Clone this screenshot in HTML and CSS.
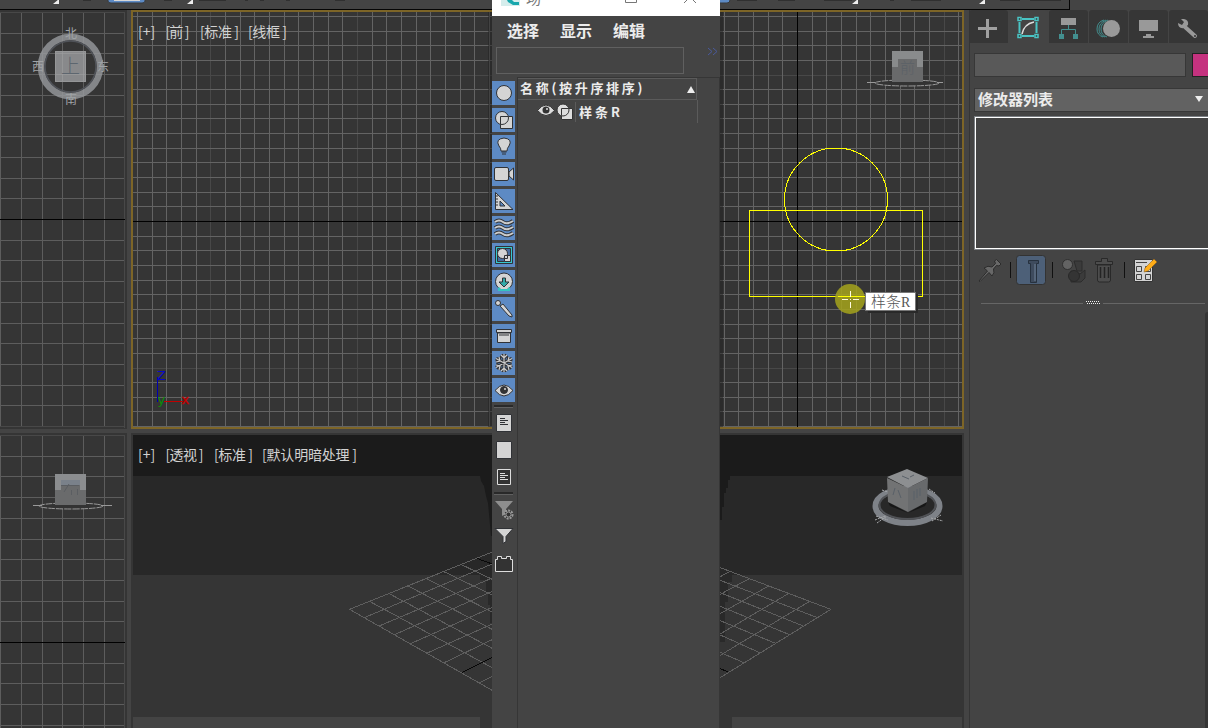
FILE: index.html
```html
<!DOCTYPE html>
<html lang="zh-CN">
<head>
<meta charset="utf-8">
<title>场景资源管理器</title>
<link rel="stylesheet" href="styles.css">
</head>
<body>
<div class="app">
  <main class="workspace">
    <div class="toolbar">
      <svg width="1070" height="10">
        <path class="tool-mark" d="M83 .5h8M164 .5h8M199 .5h27M245 .5h3M260 .5h4M286 .5h4M335 .5h10M737 .5h20M778 .5h17M824 .5h28M890 .5h4M911 .5h30M1000 .5h20M1030 .5h31"/>
        <path d="M108 -2v3q0 2 3 2h31q3 0 3-2v-3z" fill="#5d8ac4" stroke="#37393b"/><path d="M114 0h26v1h-26z" fill="#d8d8d8"/>
        <path d="M716 -2v5h11q3 0 3-3v-2z" fill="#5d8ac4" stroke="#37393b"/>
        <path class="tool-corner" d="M59 -1v5h-6zM193 -1v5h-6zM858 -1v5h-6zM985 -1v5h-6z"/>
      </svg>
    </div>
    <div class="viewports">
      <section class="viewport">
        <svg width="127" height="420" viewBox="0 10 127 420">
          <g data-grid="0 124 13 426 0 219 20.8 20.7 side"></g>
          <path class="dim" d="M0 12.500h125M124.500 12v416M0 426.500h125"/>
          <path class="axis" d="M0 219.500h125"/>
          <circle cx="70.500" cy="66.500" r="29.500" fill="none" stroke="#96989c" stroke-width="6.500" opacity=".82"/>
          <circle cx="70.500" cy="66.500" r="25.500" fill="none" stroke="#505359" stroke-width="1.500"/>
          <path d="M55 51h31v31h-31z" fill="#88898b"/><path d="M55.500 51.500h30v30h-30zM62.500 52v29M83.500 52v29M56 53.500h29M56 74.500h29" fill="none" stroke="#a0a1a3" opacity=".55"/>
          <g class="compass"><text x="65" y="38">北</text><text x="65" y="104">南</text><text x="32" y="71">西</text><text x="97" y="71">东</text></g>
          <text class="cube-face" x="61" y="73" font-size="19">上</text>
        </svg>
      </section>
      <section class="viewport active">
        <svg width="833" height="419" viewBox="131 10 833 419">
          <g data-grid="133 962 12 427 797 221 14.67 14.65 main"></g>
          <path class="axis" d="M133 221.500h829M797.500 12v415"/>
          <path d="M488 12h4v415h-4z" fill="#222" opacity=".5"/><path d="M720 12h3v415h-3z" fill="#222" opacity=".5"/>
          <g class="label"><text x="138" y="36.500">[+]</text><text x="165.500" y="36.500" textLength="24">[前 ]</text><text x="200" y="36.500" textLength="39">[标准 ]</text><text x="248" y="36.500" textLength="39">[线框 ]</text></g>
          <path d="M157.500 377v25" stroke="#0000b0"/><path d="M164 401.500h19" stroke="#c00000"/>
          <g class="tripod"><text x="157" y="379.500" fill="#0808c8">Z</text><text x="157.500" y="404" fill="#089008">y</text><text x="181.500" y="404" fill="#c80000" stroke="#c80000" stroke-width=".4">x</text></g>
          <ellipse cx="907" cy="83" rx="32" ry="3" fill="#333" stroke="#999" stroke-dasharray="7 1"/>
          <path d="M867 82.500h8M937 82.500h6" stroke="#999"/>
          <path d="M892 51h31v31h-31z" fill="#696a6b"/><path d="M892 51h31v16h-6v-8h-19v8h-6z" fill="#898b8c"/>
          <text class="cube-face faint" x="900" y="73" font-size="15">前</text>
          <g fill="none" stroke="#ff0" shape-rendering="crispEdges"><circle cx="836" cy="199.500" r="51.500"/><path d="M749.500 210.500h173v86h-173z"/></g>
          <circle cx="850" cy="299" r="15" fill="#a4a31c" opacity=".86"/><path d="M838 296.500h27" stroke="#ff0"/>
          <path d="M850.500 291v6M850.500 302v6M842 299.500h6M853 299.500h6M850 299.500h1" stroke="#fffce0"/>
          <path d="M868 294h50v19h-50z" fill="#292929"/><path d="M865.500 292.500h50v18h-50z" fill="#fff" stroke="#777"/>
          <text class="tip" x="871" y="307">样条<tspan class="tip-latin">R</tspan></text>
        </svg>
      </section>
      <section class="viewport">
        <svg width="127" height="295" viewBox="0 433 127 295">
          <g data-grid="0 124 436 728 0 642 20.8 20.7 side"></g>
          <path class="dim" d="M0 435.500h125M124.500 435v293"/><path class="axis" d="M0 642.500h125"/>
          <ellipse cx="71" cy="506" rx="32" ry="3" fill="#333" stroke="#999" stroke-dasharray="7 1"/><path d="M33 505.500h9M101 505.500h11" stroke="#999"/>
          <path d="M55 474h31v31h-31z" fill="#6a6b6c"/><path d="M55 474h31v16h-6v-6h-19v6h-6z" fill="#8b8d8f"/><path d="M61 480h19v5h-19z" fill="#7a818a"/>
          <path d="M61 485.500h18M69 484l-5 8M71.500 490v5M77.500 489v6" stroke="#5b5e62" fill="none"/>
        </svg>
      </section>
      <section class="viewport">
        <svg width="833" height="295" viewBox="131 433 833 295">
          <path d="M133 435h829v41h-829z" fill="#1b1b1b"/><path d="M133 476h829v99h-829z" fill="#282828"/>
          <path d="M133 717h347v11h-347zM732 717h230v11h-230z" fill="#444"/>
          <path d="M480 476h12v60h-1l-3-33-2-7-2-10-3-5zM720 476h10v4h-2v8h-2v5h-2v14h-2v13h-2z" fill="#1b1b1b"/><path d="M480 575h12v48h-2v-18h-2v-13h-2v-12h-6zM720 575h12v7h-4v20h-3v40h-5z" fill="#292929"/>
          <g class="floor">
            <g transform="translate(340.200 520) scale(.33333)">
              <path d="M28 268L456 96M72 293L456 132M117 318L456 174M163 344L456 214M211 371L456 262M261 399L456 312M312 428L456 359M417 489L456 469M28 268L456 511M88 244L456 443M145 220L456 385M203 198L456 328M257 175L456 276M309 154L456 225M362 133L456 178"/>
              <path class="floor-axis" d="M365 458L456 412M410 115L456 132"/>
            </g>
            <g transform="translate(720.200 400) scale(.33333)">
              <path d="M332 628L0 503M332 628L0 833M268 604L0 766M206 580L0 702M145 558L0 641M87 536L0 583M31 514L0 530M292 653L0 541M249 678L0 578M208 704L0 619M166 730L0 662M121 759L0 705M73 789L0 757"/>
              <path class="floor-axis" d="M22 815L0 806"/>
            </g>
          </g>
          <g class="label"><text x="138" y="459.500">[+]</text><text x="165.500" y="459.500" textLength="38">[透视 ]</text><text x="214" y="459.500" textLength="39">[标准 ]</text><text x="262" y="459.500" textLength="95">[默认明暗处理 ]</text></g>
          <ellipse cx="907.500" cy="506" rx="32" ry="17" fill="#282828" stroke="#7e8288" stroke-width="6"/>
          <ellipse cx="907.500" cy="505" rx="28" ry="14" fill="none" stroke="#505256" stroke-width="2"/>
          <path d="M888 502l20 11 19-11-2 4-17 7-18-7z" fill="#161616"/>
          <path d="M887 477l20-8 21 9-20 10z" fill="#8d8f91"/><path d="M887 478l21 10v24l-20-10z" fill="#727374"/><path d="M928 478l-20 10v24l19-10z" fill="#686a6c"/>
          <path d="M902 476l7 3M910 477l4-2M895 488l-2 7M898 490l3 8M914 491v9M917 489v9M920 488v8" stroke="#596068" fill="none"/>
          <g stroke="#a8aaac" stroke-dasharray="2 1"><path d="M876 516l12 4M875 520l10-4M877 523l10-7M931 518l12 3M932 521l9-6M882 490l6 2M929 489l6 4"/></g>
        </svg>
      </section>
    </div>
  </main>

  <aside class="command-panel">
    <nav class="tabs">
      <span class="tab"><svg viewBox="0 0 40 34"><path d="M9 18.500h19M18.500 9v19" stroke="#a0a0a0" stroke-width="3"/></svg></span>
      <span class="tab selected"><svg viewBox="0 0 40 34"><g fill="none" stroke="#4ac4c4" stroke-width="1.500"><path d="M13 9h12M13 26h12M10.500 12v11M27.500 12v11" stroke-width="2"/><path d="M9 7.500h3v3h-3zM26 7.500h3v3h-3zM9 24.500h3v3h-3zM26 24.500h3v3h-3z" fill="#333"/></g><path d="M13 24q2-10 12-12" stroke="#ddd" stroke-width="1.500" fill="none"/></svg></span>
      <span class="tab"><svg viewBox="0 0 40 34"><path d="M12 8h15v7h-15z" fill="#999"/><path d="M19.500 15v4M12.500 24v-4.500h14v4.500" stroke="#438f8f" fill="none"/><path d="M10 24h5v5h-5zM24 24h5v5h-5z" fill="#438f8f"/></svg></span>
      <span class="tab"><svg viewBox="0 0 40 34"><g fill="none" stroke="#438f8f"><path d="M15 10q-7 2-7 9 0 6 6 8M17 10q-7 3-7 9 0 6 6 8M19 10q-7 3-7 9 0 6 6 8"/></g><circle cx="22.500" cy="18.500" r="8.500" fill="#999"/></svg></span>
      <span class="tab"><svg viewBox="0 0 40 34"><path d="M10 10h19v11h-19zM17 24h5v2h3v2h-11v-2h3z" fill="#999"/></svg></span>
      <span class="tab"><svg viewBox="0 0 40 34"><path d="M16 17L26 26" stroke="#999" stroke-width="4" stroke-linecap="round"/><path d="M12 9l3 3-2 3-4-2q0 6 6 5l4-3q1-5-4-6z" fill="#999"/><circle cx="26" cy="26" r="1" fill="#333"/></svg></span>
    </nav>
    <div class="name-row"><div class="name-field"></div><div class="swatch"></div></div>
    <div class="modifier-select"><span>修改器列表</span><svg width="10" height="8"><path d="M1 1h8l-4 6z" fill="#eee"/></svg></div>
    <div class="modifier-stack"></div>
    <div class="stack-tools">
      <svg width="234" height="32" viewBox="974 254 234 32">
        <path d="M979 281l8.500-10-3.500-3q4-3 8-1l3.500-3.500-1-2.500 2-1.500 4.500 4.500-2 2-2.500-.5-3 3.500q1.500 4-1.500 7l-3-3.500-9 9z" fill="#686868" stroke="#2c2c2c"/>
        <path d="M1010.500 262v16M1052.500 262v16M1124.500 262v16" stroke="#111"/>
        <rect x="1016.500" y="255.500" width="29" height="29" rx="3" fill="#4d6078" stroke="#333"/>
        <path d="M1028.500 260.500h10v3h-2v19h-6v-19h-2z" fill="#3e4b5d" stroke="#26313e"/><path d="M1034 264h2v17h-2z" fill="#56667a"/>
        <path d="M1074 261h8v10h-5zM1071 271l9 3 5-4v8l-4 4-10 0z" fill="#3b3b3b" stroke="#2c2c2c"/><circle cx="1074" cy="276" r="5.500" fill="#343434" stroke="#292929"/><circle cx="1067.500" cy="264.500" r="5" fill="#636363" stroke="#303030"/>
        <path d="M1095.500 264.500h17v-3h-5v-3h-6v3h-6zM1097.500 265v15q0 2 2 2h9q2 0 2-2v-15z" fill="#4d4d4d" stroke="#292929"/><path d="M1100.500 267v11M1104.500 267v11M1108.500 267v11" stroke="#242424" stroke-width="1.500"/>
        <path d="M1134.500 259.500h18v22h-18z" fill="#d4d4d4" stroke="#333"/><path d="M1136.500 266.500h5v5h-5zM1145.500 266.500h5v5h-5zM1136.500 274.500h5v5h-5zM1145.500 274.500h5v5h-5zM1136 262.500h11" fill="none" stroke="#444"/>
        <path d="M1144 272l1-4 9-9 3 3-9 9z" fill="#ffad18" stroke="#7e561c" stroke-width=".5"/>
      </svg>
    </div>
    <div class="rollup-divider"><i></i><svg width="14" height="4"><path d="M0 .5h14M1 2.500h14" stroke="#eee" stroke-dasharray="1 1"/></svg><i></i></div>
    <div class="rollouts"></div>
  </aside>

  <div class="explorer">
    <header class="titlebar">
      <svg width="228" height="16" viewBox="492 0 228 16"><path d="M501 0h19v6h-19z" fill="#d5edec"/><path d="M507 0h5l2 2h5v3h-6l-5-3z" fill="#18a7ad"/><text x="526" y="4" class="window-name">场</text><path d="M625.500-1v3.500h11V-1M684 3l6-6 6 6" fill="none" stroke="#777"/></svg>
    </header>
    <nav class="menu"><span>选择</span><span>显示</span><span>编辑</span></nav>
    <div class="search-row"><div class="search"></div><svg width="12" height="9"><path d="M1 1l4 3.500-4 3.500M6 1l4 3.500-4 3.500" fill="none" stroke="#4a5a9c"/></svg></div>
    <div class="explorer-body">
      <div class="filters">
        <span class="filter on"><svg viewBox="0 0 24 24"><circle cx="12" cy="12" r="7.500"/></svg></span>
        <span class="filter on"><svg viewBox="0 0 24 24"><path d="M8.500 8.500h12v12h-12z"/><circle cx="10" cy="10" r="6.500"/><path d="M8.500 16v-7.500h7.500" fill="none"/></svg></span>
        <span class="filter on"><svg viewBox="0 0 24 24"><path d="M9 16q0-3-2-5-4-7 5-8 9 1 5 8-2 2-2 5zM9.500 17h5M10 19h4"/></svg></span>
        <span class="filter on"><svg viewBox="0 0 24 24"><path d="M17 10l4.500-4v12l-4.500-4z"/><path d="M4 5.500h11q1.500 0 1.500 1.500v10q0 1.500-1.500 1.500h-11q-1.500 0-1.500-1.500v-10q0-1.500 1.500-1.500z"/></svg></span>
        <span class="filter on"><svg viewBox="0 0 24 24"><path fill-rule="evenodd" d="M3.500 3.500L21 20.500H3.500zM8 12v5h5z"/><path d="M4 7h2M4 10h2M4 13h2M4 16h2"/></svg></span>
        <span class="filter on"><svg viewBox="0 0 24 24"><g class="waves-edge"><path d="M3 6q4-3 8 0t10-1M3 12q4-3 8 0t10-1M3 18q4-3 8 0t10-1"/></g><g class="waves"><path d="M3 6q4-3 8 0t10-1M3 12q4-3 8 0t10-1M3 18q4-3 8 0t10-1"/></g></svg></span>
        <span class="filter on"><svg viewBox="0 0 24 24"><path d="M3.500 3.500h17v17h-17z" fill="#35c7cf"/><path d="M5.500 5.500h13v13h-13z" fill="#496da0"/><circle cx="10.500" cy="10.500" r="5"/><path d="M12.500 12.500h6v6h-6z"/><path d="M12.500 15.500h3v-3" fill="none"/></svg></span>
        <span class="filter on"><svg viewBox="0 0 24 24"><circle cx="12" cy="11.500" r="8.500"/><path class="edge-teal" d="M7 17.500v2.500h10v-2.500" fill="none"/><path d="M10.500 8h3v4h3.500l-5 5-5-5h3.500z" fill="#35bdb9"/></svg></span>
        <span class="filter on"><svg viewBox="0 0 24 24"><path d="M8 9l3-2 9 11v2l-3-1z"/><circle cx="6" cy="6" r="2.500"/></svg></span>
        <span class="filter on"><svg viewBox="0 0 24 24"><path d="M5.500 9h13v9.500h-13zM4.500 5.500h15v3h-15z"/><path d="M7 11h10" stroke-width="1.500"/></svg></span>
        <span class="filter on"><svg viewBox="0 0 24 24"><g class="snow-edge"><path d="M12 3v18M4 7.500l16 9M20 7.500l-16 9M9 4l3 3 3-3M9 20l3-3 3 3M4 11l4-1-1-4M20 11l-4-1 1-4M4 14l4 1-1 4M20 14l-4 1 1 4"/></g><g class="snow"><path d="M12 3v18M4 7.500l16 9M20 7.500l-16 9M9 4l3 3 3-3M9 20l3-3 3 3M4 11l4-1-1-4M20 11l-4-1 1-4M4 14l4 1-1 4M20 14l-4 1 1 4"/></g></svg></span>
        <span class="filter on"><svg viewBox="0 0 24 24"><path d="M3 12.500q9-11 18 0-9 11-18 0z"/><circle cx="12" cy="12" r="3.500" fill="#333"/><circle class="glint" cx="13" cy="11" r="1"/></svg></span>
        <hr>
        <span class="filter"><svg viewBox="0 0 24 24"><path d="M4.500 3.500h15v17h-15z"/><path d="M8 7.500h5M8 9.500h8M8 11.500h5M8 13.500h8"/></svg></span>
        <span class="filter"><svg viewBox="0 0 24 24"><path d="M4.500 3.500h15v17h-15z"/></svg></span>
        <span class="filter"><svg viewBox="0 0 24 24"><path d="M5.500 4.500h13v15h-13z" fill="#303030" stroke="#d5d5d5"/><path d="M8 8.500h5M8 10.500h8M8 12.500h5M8 14.500h8" stroke="#ddd"/></svg></span>
        <hr>
        <span class="filter"><svg viewBox="0 0 24 24"><path d="M3 3h18l-7 8v5l-4 2v-7z" fill="#8e8e8e"/><circle class="gear" cx="16.500" cy="16.500" r="4"/><circle cx="16.500" cy="16.500" r="2.500" fill="#333" stroke="#999"/></svg></span>
        <span class="filter"><svg viewBox="0 0 24 24"><path d="M3 3.500h18l-7 8v5l-3 2v-7z"/></svg></span>
        <span class="filter"><svg viewBox="0 0 24 24"><path d="M3.500 19.500v-12h2v-3h4v2h5v-2h4v3h2v12z" fill="#3b3b3b" stroke="#ddd"/></svg></span>
      </div>
      <div class="object-list">
        <div class="list-head"><span>名称(按升序排序)</span><svg width="8" height="7"><path d="M4 0l4 7h-8z" fill="#eee"/></svg></div>
        <div class="list-row">
          <svg class="eye" width="18" height="14"><path d="M.5 7.500q8.500-11 17 0-8.500 10-17 0z" fill="#ddd" stroke="#333"/><circle cx="9" cy="7" r="3.500" fill="#333"/><circle cx="10" cy="6" r="1" fill="#ddd"/></svg>
          <svg width="18" height="18"><path d="M5.500 5.500h11v11h-11z" fill="#ddd" stroke="#333"/><circle cx="7" cy="7" r="6" fill="#ddd" stroke="#333"/><path d="M5.500 12v-6.500h7" fill="none" stroke="#333"/></svg>
          <span>样条R</span>
        </div>
      </div>
    </div>
  </div>
</div>
<script src="grid.js"></script>
</body>
</html>
```
FILE: styles.css
```css
* { box-sizing: border-box; }
body { margin: 0; background: #444; color: #ececec; font-family: "Noto Sans CJK SC", sans-serif; overflow: hidden; }
svg { display: block; flex: none; }
.app { position: relative; width: 1208px; height: 728px; display: flex; overflow: hidden; }
.workspace { width: 969px; flex: none; }
.toolbar { position: relative; z-index: 1; width: 1070px; height: 10px; background: #444; border-bottom: 1px solid #050505; border-right: 1px solid #050505; }
.tool-mark { stroke: #303030; }
.tool-corner { fill: #eee; }
.viewports { display: grid; grid-template-columns: 127px 833px; grid-template-rows: 419px 295px; gap: 4px; }
.viewport { background: #353535; overflow: hidden; }
.viewport.active { position: relative; }
.viewport.active::after { content: ""; position: absolute; inset: 0; border: 2px solid #7d6527; }
.grid-side { stroke: #5d5d5d; shape-rendering: crispEdges; }
.grid-main { stroke: #646464; shape-rendering: crispEdges; }
.dim { stroke: #484848; fill: none; shape-rendering: crispEdges; }
.axis { stroke: #000; shape-rendering: crispEdges; }
.label { fill: #d2d2d2; font: 14px "Noto Sans CJK SC", sans-serif; white-space: pre; }
.tripod { font: 13px "DejaVu Sans", sans-serif; }
.compass { font-size: 12px; fill: #a0a3a6; }
.cube-face { fill: #5d666f; font-weight: 300; }
.cube-face.faint { fill: #5b6167; }
.tip { font-size: 15px; fill: #555; font-weight: 300; }
.tip-latin { font-family: "Liberation Serif", serif; font-size: 14px; }
.floor { stroke: #5e5e5e; shape-rendering: crispEdges; }
.floor path { vector-effect: non-scaling-stroke; fill: none; }
.floor .floor-axis { stroke: #080808; }

.command-panel { width: 239px; flex: none; padding-top: 10px; border-left: 1px solid #353535; overflow: hidden; }
.tabs { display: flex; height: 34px; gap: 1px; margin-left: -1px; }
.tab { width: 39px; height: 33px; background: #363636; flex: none; border-radius: 3px 3px 0 0; }
.tab svg { width: 40px; height: 34px; }
.tab.selected { background: #444; height: 34px; }
.name-row { display: flex; gap: 6px; margin: 9px 0 0 4px; height: 24px; }
.name-field { width: 212px; flex: none; background: #595959; border: 1px solid #373737; }
.swatch { width: 20px; background: #c5327f; border: 1px solid #222; flex: none; }
.modifier-select { display: flex; align-items: center; justify-content: space-between; margin: 11px 0 0 4px; width: 237px; height: 24px; padding: 0 6px 2px 3px; background: #626262; border: 1px solid #383838; font-size: 15px; line-height: 20px; font-weight: 700; }
.modifier-stack { margin: 4px 0 0 4px; width: 240px; height: 134px; border: 1px solid #7b7f84; outline: 1px solid #fff; outline-offset: -2px; }
.stack-tools { margin: 4px 0 0 4px; }
.rollup-divider { height: 4px; margin: 15px 3px 0 11px; display: flex; align-items: center; gap: 3px; }
.rollup-divider i { flex: 1; height: 1px; background: #666; }
.rollouts { height: 430px; margin: 7px 0 0 235px; background: #353535; border-radius: 3px 0 0 0; }

.explorer { position: absolute; z-index: 2; left: 492px; top: 0; width: 228px; height: 728px; background: #444; }
.titlebar { height: 16px; background: #fff; }
.window-name { font-size: 15px; fill: #777; }
.menu { display: flex; gap: 21px; height: 31px; padding: 2px 0 0 15px; font-size: 16px; font-weight: 700; line-height: 24px; }
.search-row { display: flex; gap: 23px; padding-left: 4px; height: 30px; }
.search { width: 188px; height: 27px; border: 1px solid #606060; }
.explorer-body { display: flex; height: 651px; }
.filters { width: 25px; padding-top: 4px; display: flex; flex-direction: column; gap: 3px; }
.filter { width: 23px; height: 24px; flex: none; }
.filter.on { background: #5d8ac4; }
.filter svg { width: 24px; height: 24px; }
.filter path, .filter circle { stroke: #303236; fill: #d4d4d4; stroke-width: 1; }
.filter path[fill="none"] { fill: none; }
.filter [fill="#333"], .filter [fill="#303030"], .filter [fill="#3b3b3b"] { fill: #333; }
.filter [fill="#35c7cf"] { fill: #35c7cf; }
.filter [fill="#35bdb9"] { fill: #35aaa9; }
.filter [fill="#496da0"] { fill: #496da0; }
.filter [fill="#8e8e8e"] { fill: #8e8e8e; stroke: none; }
.filter [stroke="#d5d5d5"], .filter [stroke="#ddd"] { stroke: #ddd; }
.filter [stroke="#999"] { stroke: #999; }
.filter .edge-teal { stroke: #35c5bf; stroke-width: 2; }
.filter .glint { stroke: none; }
.filter .gear { fill: #333; stroke: #999; stroke-width: 2; stroke-dasharray: 2 1; }
.filter .waves-edge path { fill: none; stroke-width: 4; }
.filter .waves path { fill: none; stroke: #ccc; stroke-width: 2; }
.filter .snow-edge path { fill: none; stroke-width: 3.4; }
.filter .snow path { fill: none; stroke: #ccc; stroke-width: 1.2; }
.filters hr { width: 19px; height: 3px; margin: 0 0 0 2px; border: 0; border-top: 2px solid #292929; border-bottom: 1px solid #606060; flex: none; }
.object-list { width: 203px; border-left: 1px solid #363636; border-top: 1px solid #363636; border-right: 1px solid #363636; }
.list-head { width: 179px; height: 22px; display: flex; align-items: center; justify-content: space-between; border: 1px solid #5b5b5b; border-left: 0; padding: 0 1px 2px 2px; font-size: 13px; line-height: 18px; font-weight: 700; letter-spacing: 2.700px; white-space: nowrap; }
.list-head svg { margin-top: 2px; }
.list-row { width: 180px; height: 23px; display: flex; align-items: center; gap: 1px; padding-left: 19px; border-right: 1px solid #5b5b5b; font-size: 13px; line-height: 20px; font-weight: 700; letter-spacing: 3px; }
.list-row .eye { margin-top: -3px; }
.list-row span { border-left: 1px solid #5b5b5b; padding-left: 3px; }
```
FILE: grid.js
```js
// Draws pixel-aligned grid lines. Fields: left right top bottom originX originY stepX stepY kind
const positions = (from, to, origin, step) => {
  const result = [];
  for (let k = Math.ceil((from - origin) / step); origin + k * step < to; k++) {
    result.push({ at: Math.round(origin + k * step), k });
  }
  return result;
};
document.querySelectorAll('[data-grid]').forEach((g) => {
  const [l, r, t, b, ox, oy, sx, sy, kind] = g.dataset.grid.split(' ').map((v) => (isNaN(v) ? v : Number(v)));
  const major = [];
  const minor = [];
  const isMajor = (k) => kind === 'main' && k % 10 === 0;
  positions(l, r, ox, sx).forEach(({ at, k }) => (isMajor(k) ? major : minor).push(`M${at + 0.5} ${t}V${b}`));
  positions(t, b, oy, sy).forEach(({ at, k }) => (isMajor(k) ? major : minor).push(`M${l} ${at + 0.5}H${r}`));
  [[major, 'dim'], [minor, 'grid-' + kind]].forEach(([parts, cls]) => {
    const path = document.createElementNS('http://www.w3.org/2000/svg', 'path');
    path.setAttribute('d', parts.join(''));
    path.setAttribute('class', cls);
    g.appendChild(path);
  });
});
```
